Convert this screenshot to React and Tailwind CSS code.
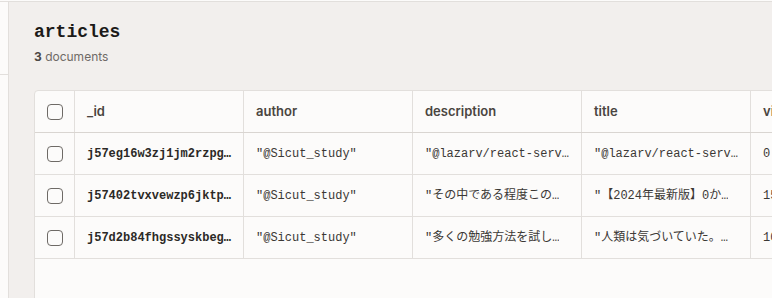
const columns = ['_id', 'author', 'description', 'title', 'views'];

const rows = [
  {
    _id: 'j57eg16w3zj1jm2rzpgx8k2v',
    author: '"@Sicut_study"',
    description: '"@lazarv/react-server"',
    title: '"@lazarv/react-server"',
    views: '0',
  },
  {
    _id: 'j57402tvxvewzp6jktpq3h1n',
    author: '"@Sicut_study"',
    description: '"その中である程度この…',
    title: '"【2024年最新版】0か…',
    views: '15',
  },
  {
    _id: 'j57d2b84fhgssyskbegm0r7c',
    author: '"@Sicut_study"',
    description: '"多くの勉強方法を試し…',
    title: '"人類は気づいていた。…',
    views: '10',
  },
];

const mono = "font-['Liberation_Mono','Noto_Sans_CJK_JP',monospace]";

function Checkbox() {
  return <div className="h-4 w-4 rounded-[4px] border border-[#6e6a66] bg-[#fcfbfa]" />;
}

export default function App() {
  return (
    <div className="flex h-[298px] w-[772px] overflow-hidden bg-[#fcfbfa] pt-px font-['Inter',sans-serif]">
      {/* Sidebar edge */}
      <div className="w-[9px] shrink-0 border-r border-t border-[#e2dfdc]">
        <div className="h-[73px] border-b border-[#e2dfdc]" />
      </div>

      <div className="min-w-0 flex-1 border-t border-[#e2dfdc] bg-[#f2efed] pl-[25px] pt-[18px]">
        <h1 className={`${mono} text-[18px] font-bold leading-6 text-[#1c1a18]`}>articles</h1>
        <p className="mt-[5px] text-[12px] leading-4 text-[#6f6a66]">
          <span className="font-bold text-[#4d4945]">3</span> documents
        </p>

        {/* Table card */}
        <div className="mt-[25px] h-[300px] w-[900px] rounded-tl-[4px] border border-[#e2dfdc] bg-[#fcfbfa]">
          <div className="grid grid-cols-[40px_169px_169px_169px_169px_169px] border-b border-[#d9d5d1]">
            <div className="flex h-[41px] items-center justify-center border-r border-[#e2dfdc]">
              <Checkbox />
            </div>
            {columns.map((c) => (
              <div
                key={c}
                className="flex h-[41px] items-center border-r border-[#e2dfdc] pl-[12px] text-[13px] font-semibold text-[#4a4540]"
              >
                {c}
              </div>
            ))}
          </div>

          {rows.map((r) => (
            <div
              key={r._id}
              className="grid grid-cols-[40px_169px_169px_169px_169px_169px] border-b border-[#e2dfdc]"
            >
              <div className="flex h-[41px] items-center justify-center border-r border-[#e2dfdc]">
                <Checkbox />
              </div>
              {columns.map((c) => (
                <div
                  key={c}
                  className={`flex h-[41px] min-w-0 items-center border-r border-[#e2dfdc] pl-[12px] pr-[9px] text-[12px] ${mono} ${
                    c === '_id' ? 'font-bold text-[#2b2926]' : 'text-[#3b3835]'
                  }`}
                >
                  <span className="truncate">{r[c]}</span>
                </div>
              ))}
            </div>
          ))}
        </div>
      </div>
    </div>
  );
}
